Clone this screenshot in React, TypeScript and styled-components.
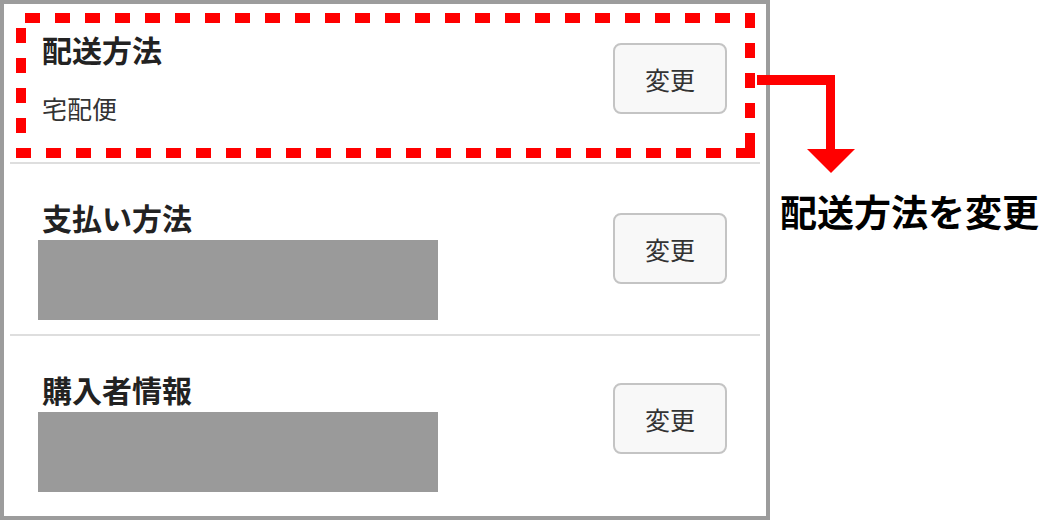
import React from "react";
import styled, { createGlobalStyle } from "styled-components";

const GlobalStyle = createGlobalStyle`
  html, body {
    margin: 0;
    padding: 0;
    background: #ffffff;
  }
  body {
    font-family: "Noto Sans CJK JP", "Noto Sans", sans-serif;
    color: #222222;
  }
`;

const Stage = styled.div`
  position: relative;
  display: flex;
  width: 1040px;
  height: 520px;
  overflow: hidden;
`;

const Panel = styled.section`
  box-sizing: border-box;
  width: 770px;
  height: 520px;
  border: 4px solid #9c9c9c;
  background: #ffffff;
  display: flex;
  flex-direction: column;
`;

const Row = styled.div<{ $height: number; $top: number; $last?: boolean }>`
  position: relative;
  box-sizing: border-box;
  height: ${(p) => p.$height}px;
  margin: 0 6px;
  padding: ${(p) => p.$top}px 33px 0 28px;
  display: flex;
  justify-content: space-between;
  align-items: flex-start;
  border-bottom: ${(p) => (p.$last ? "none" : "2px solid #dedede")};
`;

const Info = styled.div`
  display: flex;
  flex-direction: column;
`;

const Title = styled.h2`
  margin: 0;
  padding-left: 4px;
  font-size: 30px;
  line-height: 36px;
  font-weight: 700;
  color: #222222;
`;

const Value = styled.p`
  margin: 23px 0 0;
  padding-left: 4px;
  font-size: 25px;
  line-height: 36px;
  font-weight: 400;
  color: #333333;
`;

const Masked = styled.div`
  margin-top: 5px;
  width: 400px;
  height: 80px;
  background: #9a9a9a;
`;

const ChangeButton = styled.button<{ $offset: number }>`
  box-sizing: border-box;
  margin-top: ${(p) => p.$offset}px;
  width: 114px;
  height: 71px;
  border: 2px solid #c4c4c4;
  border-radius: 8px;
  background: #f8f8f8;
  font-family: "Noto Sans CJK JP", sans-serif;
  font-size: 25px;
  color: #333333;
  padding: 0;
  cursor: pointer;
`;

const Highlight = styled.svg`
  position: absolute;
  left: 6px;
  top: 9px;
  pointer-events: none;
`;

const Arrow = styled.svg`
  position: absolute;
  left: 757px;
  top: 75px;
  pointer-events: none;
`;

const Aside = styled.aside`
  flex: 1;
  padding: 193px 0 0 10px;
`;

const Callout = styled.p`
  margin: 0;
  font-size: 37px;
  line-height: 36px;
  font-weight: 700;
  color: #000000;
  white-space: nowrap;
`;

const RED = "#ff0000";

function DashedFrame() {
  const rects: React.ReactNode[] = [];
  for (let k = 0; k <= 23; k++) {
    rects.push(<rect key={`t${k}`} x={9 + 30 * k} y={0} width={15} height={10} />);
  }
  for (let k = 0; k <= 4; k++) {
    rects.push(<rect key={`r${k}`} x={729} y={30 * k} width={10} height={15} />);
  }
  for (let k = 0; k <= 24; k++) {
    rects.push(
      <rect key={`b${k}`} x={30 * k} y={135} width={k === 24 ? 19 : 15} height={10} />
    );
  }
  for (let k = 0; k <= 3; k++) {
    rects.push(<rect key={`l${k}`} x={0} y={15 + 30 * k} width={10} height={15} />);
  }
  return (
    <Highlight width={739} height={145} viewBox="0 0 739 145" fill={RED}>
      {rects}
    </Highlight>
  );
}

export default function App() {
  return (
    <>
      <GlobalStyle />
      <Stage>
        <Panel>
          <Row $height={160} $top={27}>
            <Info>
              <Title>配送方法</Title>
              <Value>宅配便</Value>
            </Info>
            <ChangeButton $offset={12}>変更</ChangeButton>
            <DashedFrame />
          </Row>
          <Row $height={172} $top={35}>
            <Info>
              <Title>支払い方法</Title>
              <Masked />
            </Info>
            <ChangeButton $offset={14}>変更</ChangeButton>
          </Row>
          <Row $height={180} $top={35} $last>
            <Info>
              <Title>購入者情報</Title>
              <Masked />
            </Info>
            <ChangeButton $offset={12}>変更</ChangeButton>
          </Row>
        </Panel>
        <Aside>
          <Callout>配送方法を変更</Callout>
        </Aside>
        <Arrow width={100} height={100} viewBox="0 0 100 100" fill={RED}>
          <rect x={0} y={0} width={78} height={10} />
          <rect x={69} y={0} width={9} height={75} />
          <polygon points="50,74 98,74 74,98" />
        </Arrow>
      </Stage>
    </>
  );
}
